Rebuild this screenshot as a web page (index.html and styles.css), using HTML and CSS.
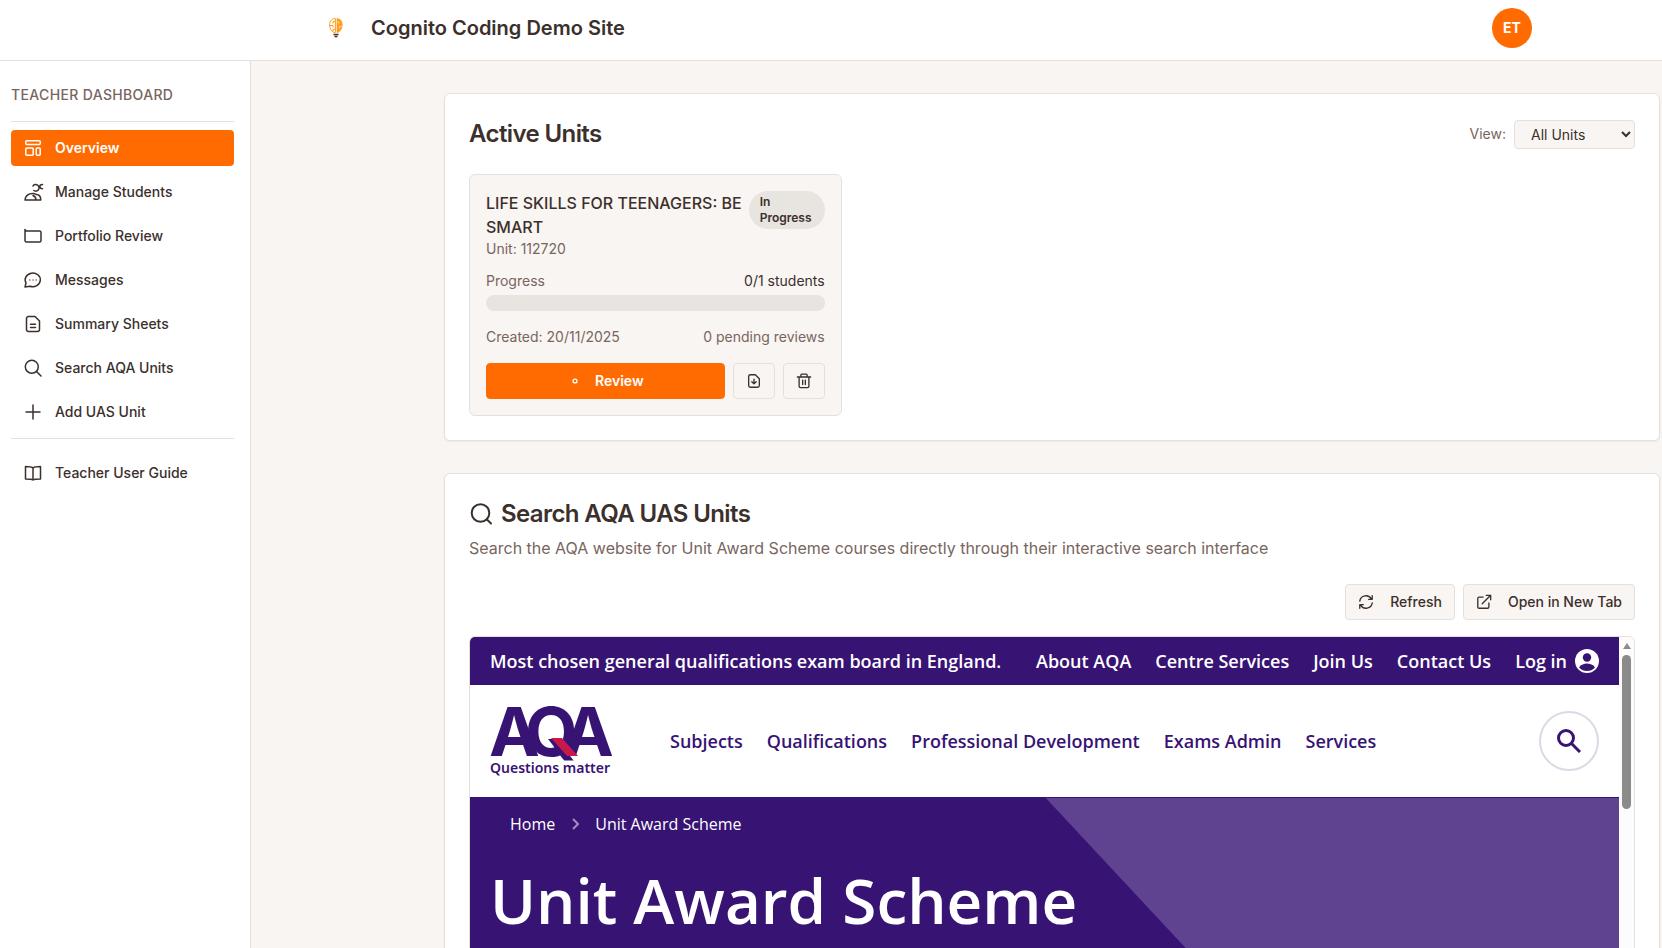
FILE: index.html
```html
<!DOCTYPE html>
<html lang="en">
<head>
    <meta charset="UTF-8">
    <meta name="viewport" content="width=device-width, initial-scale=1.0">
    <title>Cognito Coding Demo Site</title>
    <link rel="stylesheet" href="styles.css">
</head>
<body>
    <header class="site-header">
        <div class="header-inner">
            <a class="brand" href="#">
                <svg class="brand-logo" viewBox="0 0 14 20" aria-hidden="true">
                    <path d="M6.400 .5C3 .5 .6 3 .6 7c0 3.500 2 6.500 4.400 7.500h1.400z" fill="#fff" stroke="#ff9d1c"/>
                    <path d="M6 3.500H4v2M1 7.500h3v2M6 11.500H4v2" fill="none" stroke="#ff9d1c"/>
                    <path d="M7.600 .3C11 .3 13.600 3 13.600 7c0 3.500-2 6.500-4.600 7.800H7.600z" fill="#ff9d1c"/>
                    <path d="M8 4h2v2M13 8.500h-2.500v2" fill="none" stroke="#fff" stroke-width=".5"/>
                    <path d="M4.500 16.500h5M5.500 18.500h3" stroke="#3b3330" stroke-width="1.400"/>
                </svg>
                <span class="brand-name">Cognito Coding Demo Site</span>
            </a>
            <button class="avatar" type="button">ET</button>
        </div>
    </header>

    <div class="layout">
        <aside class="sidebar">
            <p class="sidebar-title">TEACHER DASHBOARD</p>
            <nav class="side-nav">
                <a class="nav-item active" href="#">
                    <svg class="icon" viewBox="0 0 18 18"><rect x="1.800" y="1.800" width="14.400" height="3.700" rx="1"/><rect x="1.800" y="9" width="7.400" height="7.200" rx="1"/><rect x="12.200" y="9" width="4" height="7.200" rx="1"/></svg>
                    Overview
                </a>
                <a class="nav-item" href="#">
                    <svg class="icon" viewBox="0 0 18 18"><path d="M1 17h15.800c0-3.500-1.500-5.500-4.600-5.500-1.200-.8-2.200-1-3.200-1C4.500 10.500 1.500 12.500 1 17zM9 12.500c2 .8 3 2.200 3 4.500M9 3a3.300 3.300 0 1 1 .8 4.500M18.500 1.500c-2 0-3 .8-2.500 2.300 0 1.500 1 2 2.500 2"/></svg>
                    Manage Students
                </a>
                <a class="nav-item" href="#">
                    <svg class="icon" viewBox="0 0 18 18"><path d="M1 2.500v11a1.500 1.500 0 0 0 1.500 1.500h13a1.500 1.500 0 0 0 1.500-1.500v-8A1.500 1.500 0 0 0 15.500 4H3Q1.500 4 1 2.500z"/></svg>
                    Portfolio Review
                </a>
                <a class="nav-item" href="#">
                    <svg class="icon" viewBox="0 0 18 18"><path d="M1 16l1-4A7.600 6.800 0 1 1 6 15.200z"/><path d="M5.500 9h.5M8.800 9h.5M12 9h.5" stroke-width="1"/></svg>
                    Messages
                </a>
                <a class="nav-item" href="#">
                    <svg class="icon" viewBox="0 0 18 18"><path d="M4.500 1.500H11L15.500 6v8.500a2 2 0 0 1-2 2h-9a2 2 0 0 1-2-2v-11a2 2 0 0 1 2-2zM6.500 9.300h5M6.500 12.500h5"/></svg>
                    Summary Sheets
                </a>
                <a class="nav-item" href="#">
                    <svg class="icon" viewBox="0 0 18 18"><circle cx="7.800" cy="7.800" r="6.500"/><path d="M12.500 12.500l4.500 4.500"/></svg>
                    Search AQA Units
                </a>
                <a class="nav-item" href="#">
                    <svg class="icon" viewBox="0 0 18 18"><path d="M9 2v14M2 9h14"/></svg>
                    Add UAS Unit
                </a>
            </nav>
            <nav class="side-nav help-nav">
                <a class="nav-item" href="#">
                    <svg class="icon" viewBox="0 0 18 18"><path d="M9 4C8 2.800 6 2.500 1.500 2.500V15C6 15 8 15 9 16c1-1 3-1 7.500-1V2.500C12 2.500 10 2.800 9 4zm0 0v12"/></svg>
                    Teacher User Guide
                </a>
            </nav>
        </aside>

        <main class="content">
            <section class="card">
                <div class="card-head">
                    <h2>Active Units</h2>
                    <div class="view-filter">
                        <label for="view">View:</label>
                        <select id="view">
                            <option>All Units</option>
                            <option>In Progress</option>
                            <option>Completed</option>
                        </select>
                    </div>
                </div>
                <div class="unit-grid">
                    <article class="unit">
                        <div class="unit-top">
                            <div>
                                <h3>LIFE SKILLS FOR TEENAGERS: BE SMART</h3>
                                <p class="muted">Unit: 112720</p>
                            </div>
                            <span class="badge">In Progress</span>
                        </div>
                        <div class="unit-row progress-row">
                            <span class="muted">Progress</span>
                            <span>0/1 students</span>
                        </div>
                        <div class="progress"></div>
                        <div class="unit-row muted">
                            <span>Created: 20/11/2025</span>
                            <span>0 pending reviews</span>
                        </div>
                        <div class="unit-actions">
                            <button class="btn primary" type="button">
                                <svg class="icon" viewBox="0 0 18 18"><circle cx="9" cy="9" r="2.200"/></svg>
                                Review
                            </button>
                            <button class="btn square" type="button" aria-label="Download">
                                <svg class="icon" viewBox="0 0 18 18"><path d="M5 2h5.500L15 6.500V14a2 2 0 0 1-2 2H5a2 2 0 0 1-2-2V4a2 2 0 0 1 2-2zM9 7v5M6.500 9.800L9 12.200l2.500-2.400"/></svg>
                            </button>
                            <button class="btn square" type="button" aria-label="Delete">
                                <svg class="icon" viewBox="0 0 18 18"><path d="M1.500 4.500h15M5.500 4.500V2.200a1 1 0 0 1 1-1h5a1 1 0 0 1 1 1v2.300M3.500 4.500V15A1.500 1.500 0 0 0 5 16.500h8a1.500 1.500 0 0 0 1.500-1.500V4.500M7.500 8v5M10.500 8v5"/></svg>
                            </button>
                        </div>
                    </article>
                </div>
            </section>

            <section class="card">
                <h2 class="search-title">
                    <svg class="icon icon-lg" viewBox="0 0 24 24"><circle cx="11.500" cy="11" r="8.800"/><path d="M18 17.500l4 4"/></svg>
                    Search AQA UAS Units
                </h2>
                <p class="search-text">Search the AQA website for Unit Award Scheme courses directly through their interactive search interface</p>
                <div class="toolbar">
                    <button class="btn" type="button">
                        <svg class="icon" viewBox="0 0 18 18"><path d="M2 8a7 7 0 0 1 13-2.500M16 2v4h-4M16 10a7 7 0 0 1-13 2.500M2 16v-4h4"/></svg>
                        Refresh
                    </button>
                    <button class="btn" type="button">
                        <svg class="icon" viewBox="0 0 18 18"><path d="M8 3.500H3.500A1.500 1.500 0 0 0 2 5v9.500A1.500 1.500 0 0 0 3.500 16H13a1.500 1.500 0 0 0 1.500-1.500V10M7 11l9.500-9.500M11.500 1.500h5v5"/></svg>
                        Open in New Tab
                    </button>
                </div>

                <div class="frame">
                    <div class="aqa">
                        <div class="aqa-top">
                            <span>Most chosen general qualifications exam board in England.</span>
                            <nav class="aqa-links">
                                <a href="#">About AQA</a>
                                <a href="#">Centre Services</a>
                                <a href="#">Join Us</a>
                                <a href="#">Contact Us</a>
                                <a class="login" href="#">Log in
                                    <svg viewBox="0 0 24 24" width="24" height="24"><circle cx="12" cy="12" r="12" fill="#fff"/><circle cx="12" cy="8.500" r="4.200" fill="#371373"/><path d="M4 18.500c2-3 5-4 8-4s6 1 8 4c-2 2.500-5 3.500-8 3.500s-6-1-8-3.500z" fill="#371373"/></svg>
                                </a>
                            </nav>
                        </div>
                        <div class="aqa-main">
                            <a class="aqa-logo" href="#">
                                <svg viewBox="0 0 124 54" width="124" height="54">
                                    <text class="aqa-letters" x="-1 35 73" y="52">AQA</text>
                                    <path d="M61 34h11l16 18H77z" fill="#c8194b"/>
                                </svg>
                                <span>Questions matter</span>
                            </a>
                            <nav class="aqa-nav">
                                <a href="#">Subjects</a>
                                <a href="#">Qualifications</a>
                                <a href="#">Professional Development</a>
                                <a href="#">Exams Admin</a>
                                <a href="#">Services</a>
                            </nav>
                            <button class="aqa-search" type="button" aria-label="Search">
                                <svg viewBox="0 0 24 24" width="24" height="24"><circle cx="9" cy="9" r="7.500"/><path d="M14 14l9 9"/></svg>
                            </button>
                        </div>
                        <div class="aqa-hero">
                            <nav class="crumbs">
                                <a href="#">Home</a>
                                <svg viewBox="0 0 8 12" width="8" height="12"><path d="M2 1l5 5-5 5"/></svg>
                                <a href="#">Unit Award Scheme</a>
                            </nav>
                            <h1>Unit Award Scheme</h1>
                        </div>
                    </div>
                    <div class="scrollbar">
                        <span class="scroll-up"></span>
                        <span class="scroll-thumb"></span>
                    </div>
                </div>
            </section>
        </main>
    </div>
</body>
</html>
```
FILE: styles.css
```css
* {
    box-sizing: border-box;
}

body {
    margin: 0;
    height: 100vh;
    overflow: hidden;
    display: flex;
    flex-direction: column;
    font-family: Inter, sans-serif;
    font-size: 14px;
    line-height: 20px;
    color: #3b302c;
    background: #f9f5f2;
}

h1, h2, h3, p {
    margin: 0;
}

a {
    color: inherit;
    text-decoration: none;
}

button, select {
    font: inherit;
    color: inherit;
}

.icon {
    width: 18px;
    height: 18px;
    flex: none;
    overflow: visible;
    fill: none;
    stroke: currentColor;
    stroke-width: 1.5;
    stroke-linecap: round;
    stroke-linejoin: round;
}

/* Header */
.site-header {
    flex: none;
    background: #fff;
    border-bottom: 1px solid #e7e0da;
}

.header-inner {
    display: flex;
    align-items: center;
    justify-content: space-between;
    height: 60px;
    padding: 0 130px 4px 329px;
}

.brand {
    display: flex;
    align-items: center;
    gap: 28px;
}

.brand-logo {
    width: 14px;
    height: 20px;
}

.brand-name {
    font-size: 20px;
    line-height: 28px;
    font-weight: 600;
}

.avatar {
    width: 40px;
    height: 40px;
    padding: 0;
    border: none;
    border-radius: 50%;
    background: #ff6b00;
    color: #fff;
    font-weight: 700;
}

/* Sidebar */
.layout {
    flex: 1;
    display: flex;
    min-height: 0;
}

.sidebar {
    flex: none;
    width: 251px;
    padding: 24px 16px 0 11px;
    background: #fff;
    border-right: 1px solid #e7e0da;
}

.sidebar-title {
    padding-bottom: 16px;
    border-bottom: 1px solid #e7e0da;
    color: #78655e;
    font-weight: 500;
    letter-spacing: 0.025em;
}

.side-nav {
    display: flex;
    flex-direction: column;
    gap: 8px;
    padding: 8px 0;
}

.help-nav {
    padding-top: 16px;
    border-top: 1px solid #e7e0da;
}

.nav-item {
    display: flex;
    align-items: center;
    gap: 13px;
    height: 36px;
    padding: 0 13px;
    border-radius: 4px;
    font-weight: 500;
}

.nav-item.active {
    background: #ff6b00;
    color: #fff;
    font-weight: 600;
}

/* Cards */
.content {
    flex: 1;
    min-width: 0;
    padding: 32px 2px 0 0;
}

.card {
    max-width: 1216px;
    margin: 0 0 32px auto;
    padding: 24px;
    background: #fff;
    border: 1px solid #e7e0da;
    border-radius: 6px;
    box-shadow: 0 1px 2px rgba(0, 0, 0, 0.05);
}

h2 {
    font-size: 24px;
    line-height: 32px;
    font-weight: 600;
    letter-spacing: -0.025em;
}

.card-head {
    display: flex;
    align-items: center;
    justify-content: space-between;
    margin-bottom: 24px;
}

.view-filter {
    display: flex;
    align-items: center;
    gap: 8px;
    color: #78655e;
}

.view-filter select {
    width: 121px;
    height: 29px;
    padding: 0 0 0 12px;
    background: #f9f5f2;
    border: 1px solid #e7e0da;
    border-radius: 4px;
    color: #3b302c;
}

.muted {
    color: #78655e;
}

.unit-grid {
    display: grid;
    grid-template-columns: repeat(3, 1fr);
    gap: 24px;
}

.unit {
    padding: 16px;
    background: #f9f5f2;
    border: 1px solid #e7e0da;
    border-radius: 6px;
}

.unit-top {
    display: flex;
    align-items: flex-start;
    justify-content: space-between;
    gap: 6px;
}

.unit h3 {
    font-size: 16px;
    line-height: 24px;
    font-weight: 500;
}

.badge {
    width: 76px;
    flex: none;
    padding: 3px 11px;
    border-radius: 19px;
    background: #e8e4df;
    font-size: 12px;
    line-height: 16px;
    font-weight: 600;
}

.unit-row {
    display: flex;
    justify-content: space-between;
}

.progress-row {
    margin: 12px 0 4px;
}

.progress {
    height: 16px;
    margin-bottom: 16px;
    border-radius: 8px;
    background: #e8e4df;
}

.unit-actions {
    display: flex;
    gap: 8px;
    margin-top: 16px;
}

.btn {
    display: flex;
    align-items: center;
    justify-content: center;
    gap: 16px;
    height: 36px;
    padding: 0 12px;
    background: #f9f5f2;
    border: 1px solid #e7e0da;
    border-radius: 4px;
    font-weight: 500;
}

.btn .icon {
    width: 16px;
    height: 16px;
}

.btn.primary {
    flex: 1;
    gap: 12px;
    background: #ff6b00;
    border-color: #ff6b00;
    color: #fff;
    font-weight: 600;
}

.btn.square {
    width: 42px;
    padding: 0;
}

/* Search */
.search-title {
    display: flex;
    align-items: center;
    gap: 8px;
}

.icon-lg {
    width: 24px;
    height: 24px;
    stroke-width: 2;
}

.search-text {
    margin-top: 6px;
    font-size: 16px;
    line-height: 24px;
    color: #78655e;
}

.toolbar {
    display: flex;
    justify-content: flex-end;
    gap: 8px;
    margin: 24px 0 16px;
}

.frame {
    display: flex;
    height: 600px;
    overflow: hidden;
    border: 1px solid #e7e0da;
    border-radius: 6px;
    font-family: "Open Sans", sans-serif;
    color: #371373;
}

.aqa {
    flex: 1;
}

.aqa-top {
    display: flex;
    align-items: center;
    justify-content: space-between;
    height: 48px;
    padding: 0 20px;
    background: #371373;
    color: #fff;
    font-size: 18px;
    font-weight: 600;
}

.aqa-links {
    display: flex;
    align-items: center;
    gap: 24px;
}

.login {
    display: flex;
    align-items: center;
    gap: 8px;
}

.aqa-main {
    display: flex;
    align-items: center;
    height: 112px;
    padding: 0 20px;
}

.aqa-logo {
    display: flex;
    flex-direction: column;
    width: 124px;
    font-family: "Noto Sans", sans-serif;
    font-size: 14px;
    font-weight: 600;
    white-space: nowrap;
}

.aqa-logo svg {
    overflow: visible;
}

.aqa-letters {
    font-family: Inter, sans-serif;
    font-size: 68px;
    font-weight: 700;
    fill: #371373;
}

.aqa-nav {
    flex: 1;
    display: flex;
    gap: 24px;
    margin-left: 56px;
    font-size: 18px;
    font-weight: 600;
}

.aqa-search {
    display: flex;
    align-items: center;
    justify-content: center;
    width: 60px;
    height: 60px;
    padding: 0;
    background: #fff;
    border: 2px solid #dcd9e6;
    border-radius: 50%;
}

.aqa-search svg {
    fill: none;
    stroke: #371373;
    stroke-width: 3;
}

.aqa-hero {
    height: 440px;
    padding: 14px 20px;
    border-top: 1px solid #371373;
    background: linear-gradient(47deg, #371373 720px, #5f4290 721px);
    color: #fff;
}

.crumbs {
    display: flex;
    align-items: center;
    gap: 16px;
    padding-left: 20px;
    font-size: 16px;
    line-height: 24px;
    font-weight: 500;
}

.crumbs svg {
    fill: none;
    stroke: #a08fc0;
    stroke-width: 2;
}

.aqa-hero h1 {
    margin-top: 20px;
    font-size: 62px;
    line-height: 88px;
    font-weight: 600;
}

/* Scrollbar of the embedded page */
.scrollbar {
    display: flex;
    flex-direction: column;
    align-items: center;
    gap: 6px;
    width: 15px;
    padding-top: 6px;
    background: #fcfcfc;
}

.scroll-up {
    border: 4px solid transparent;
    border-top: none;
    border-bottom: 6px solid #8b8b8b;
}

.scroll-thumb {
    width: 9px;
    height: 154px;
    border-radius: 5px;
    background: #8b8b8b;
}
```
